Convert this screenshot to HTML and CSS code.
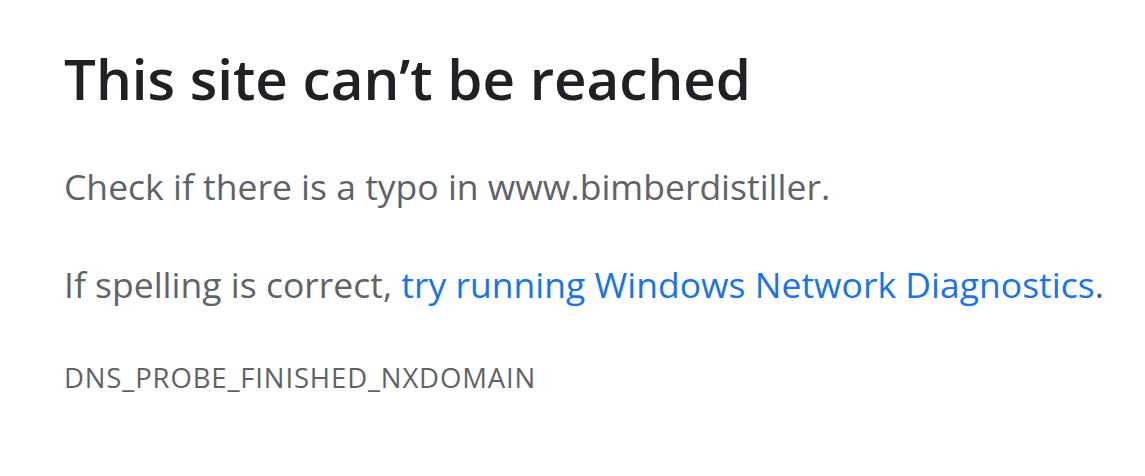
FILE: index.html
```html
<!DOCTYPE html>
<html lang="en">
<head>
<meta charset="utf-8">
<title>This site can’t be reached</title>
<link rel="stylesheet" href="styles.css">
</head>
<body>
<main class="page">
  <h1 class="title">This site can’t be reached</h1>
  <p class="line">Check if there is a typo in www.bimberdistiller.</p>
  <p class="line line-second">If spelling is correct, <a class="link" href="#">try running Windows Network Diagnostics</a>.</p>
  <div class="code">DNS_PROBE_FINISHED_NXDOMAIN</div>
</main>
</body>
</html>
```
FILE: styles.css
```css
html, body {
  margin: 0;
  padding: 0;
  background: #ffffff;
}
.page {
  display: flex;
  flex-direction: column;
  align-items: flex-start;
  padding: 44px 0 0 64px;
  font-family: "Open Sans", "Noto Sans", sans-serif;
}
.title {
  margin: 0;
  font-size: 56.5px;
  line-height: 70px;
  font-weight: 600;
  color: #202124;
}
.line {
  margin: 48px 0 0;
  font-size: 35.5px;
  line-height: 48px;
  color: #5f6368;
}
.line-second {
  margin-top: 50px;
}
.link {
  color: #1a73e8;
  text-decoration: none;
}
.code {
  margin-top: 52px;
  font-size: 27.5px;
  line-height: 36px;
  letter-spacing: 0.85px;
  color: #5f6368;
}
```
